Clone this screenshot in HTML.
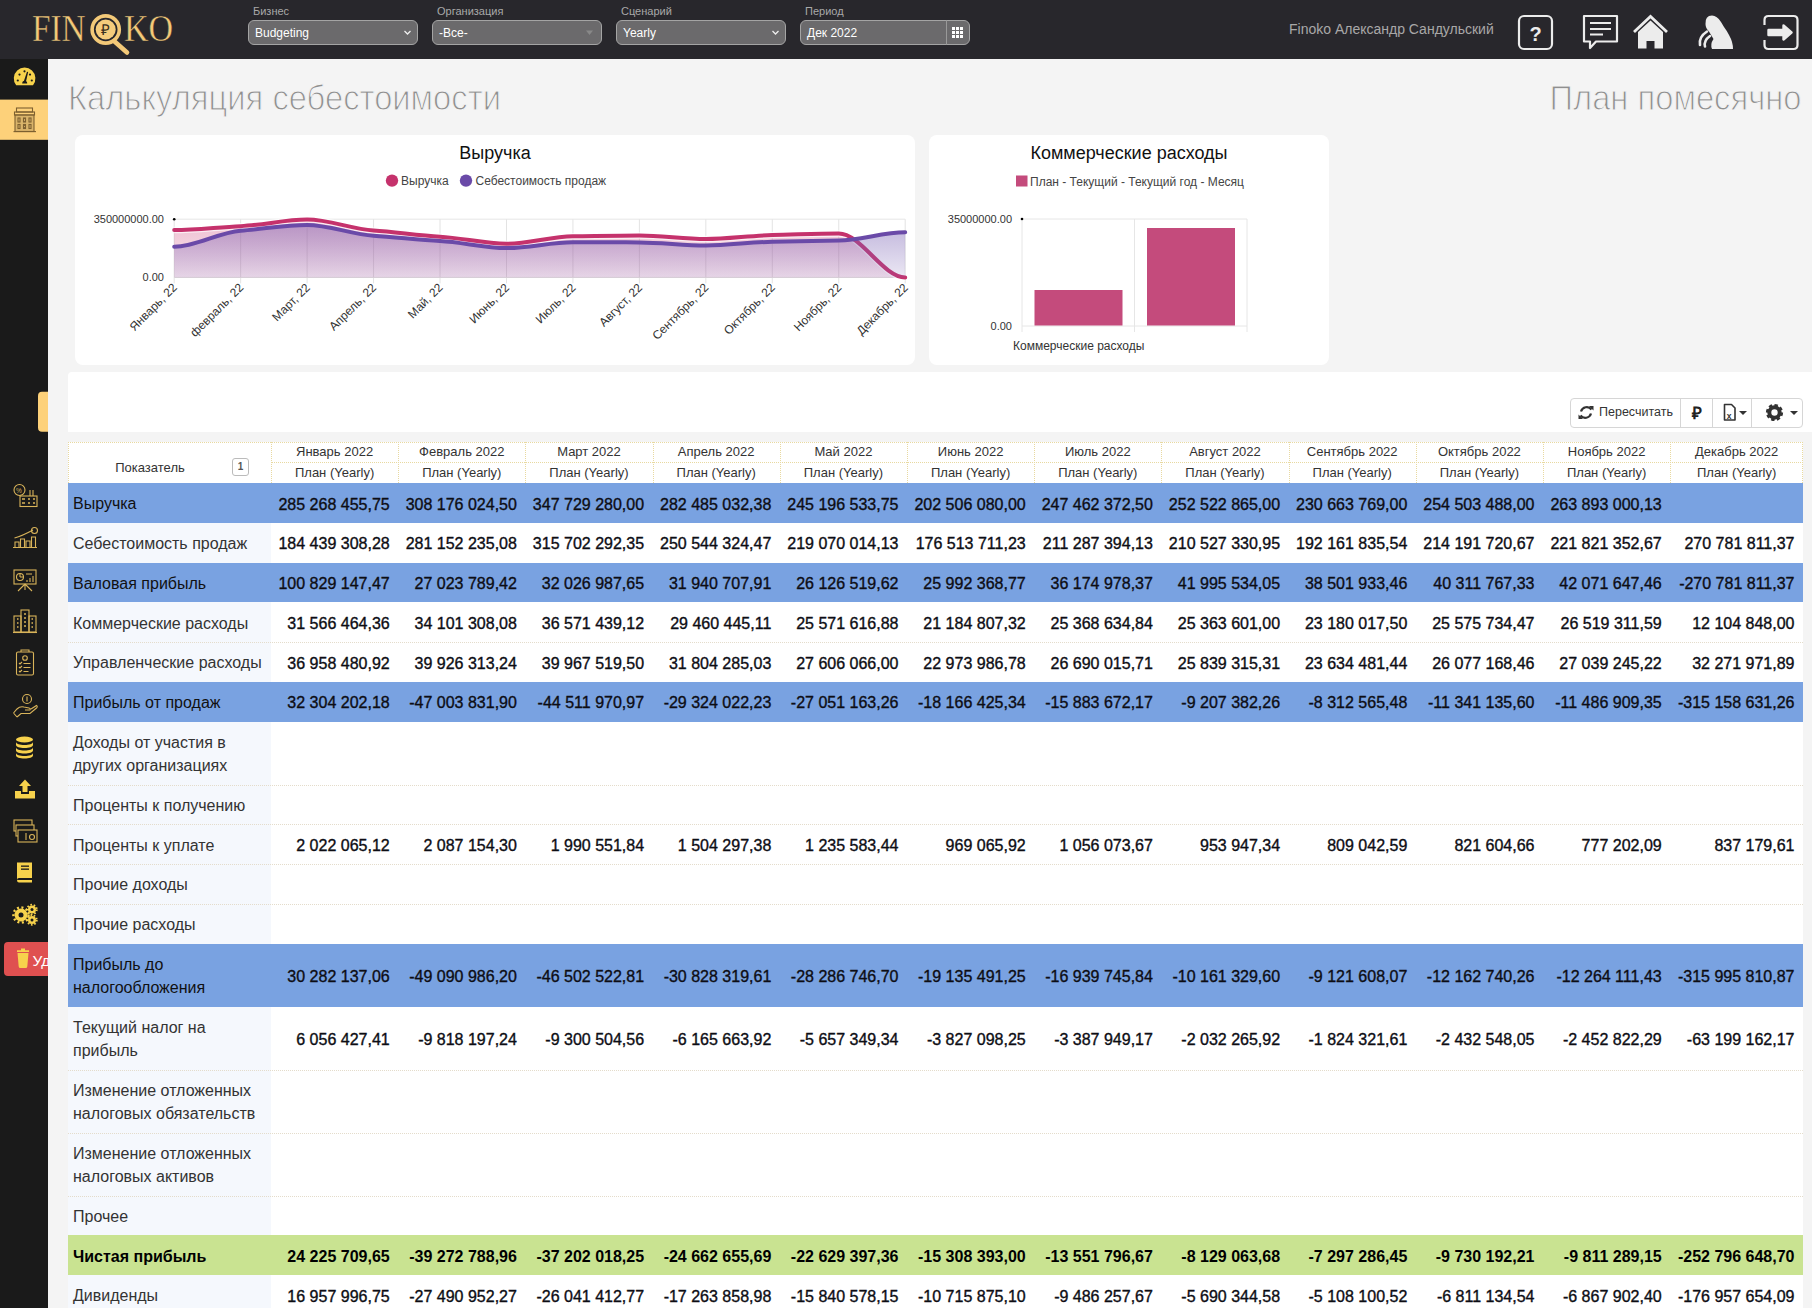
<!DOCTYPE html>
<html><head><meta charset="utf-8">
<style>
*{box-sizing:border-box;margin:0;padding:0}
html,body{width:1812px;height:1308px;overflow:hidden;background:#f4f4f4;font-family:"Liberation Sans",sans-serif;position:relative}
.abs{position:absolute}
#top{position:absolute;left:0;top:0;width:1812px;height:59px;background:#28272c}
#side{position:absolute;left:0;top:59px;width:48px;height:1249px;background:#1a1a1a}
.flbl{position:absolute;top:5px;font-size:11px;color:#a9a9a9}
.sel{position:absolute;top:20px;height:25px;width:170px;border:1px solid #a4a4a4;border-radius:6px;background:#6b6a6c;color:#fff;font-size:12px;padding:5px 0 0 6px}
.title{position:absolute;top:78px;font-size:35px;color:#8f8f8f;font-weight:normal;letter-spacing:0;transform:scaleX(0.935);transform-origin:0 0;-webkit-text-stroke:1.1px #f4f4f4;white-space:nowrap}
.card{position:absolute;background:#fff;border-radius:8px}
.ctitle{position:absolute;font-size:18px;color:#111;text-align:center;width:100%}
.leg{position:absolute;font-size:12px;color:#333}
.axl{position:absolute;font-size:11px;color:#333}
.hl{position:absolute;height:1px;border-top:1px dotted #e8d9a0}
.vl{position:absolute;width:1px;border-left:1px dotted #e8d9a0}
.hdr{position:absolute;text-align:center;font-size:13px;color:#333}
.badge{position:absolute;width:17px;height:18px;border:1px solid #bbb;border-radius:3px;font-size:10px;color:#555;text-align:center;line-height:16px;font-weight:bold}
.row{position:absolute;left:68px;width:1735px;background:#fff}
.sep{position:absolute;left:68px;width:1735px;height:1px;border-top:1px dotted #e4dccb}
.rb{background:#79a2e1}
.rg{background:#c9e391}
.lbl{position:absolute;left:0;top:0;display:flex;align-items:center;background:#f5f8fd}
.rb .lbl,.rg .lbl{background:transparent}
.lt{padding-left:5px;font-size:16px;line-height:23px;color:#333;position:relative;top:1px}
.rb .lt{color:#111}
.rg .lt{color:#000;font-weight:bold}
.val{position:absolute;top:1.5px;text-align:right;padding-right:8.5px;font-size:16px;color:#0d0d14;white-space:nowrap;-webkit-text-stroke:0.35px #0d0d14}
.rg .val{font-weight:bold;color:#000;-webkit-text-stroke:0}
</style></head><body>
<div id="top">
  <div class="flbl" style="left:253px">Бизнес</div>
  <div class="sel" style="left:248px">Budgeting</div>
  <div class="flbl" style="left:437px">Организация</div>
  <div class="sel" style="left:432px">-Все-</div>
  <div class="flbl" style="left:621px">Сценарий</div>
  <div class="sel" style="left:616px">Yearly</div>
  <div class="flbl" style="left:805px">Период</div>
  <div class="sel" style="left:800px">Дек 2022</div>
  <div class="abs" style="left:1289px;top:20.5px;font-size:14px;color:#a8a8a8">Finoko Александр Сандульский</div>
</div>
<svg class="abs" style="left:0;top:0" width="1812" height="59">
<g fill="#f3c978" font-family="Liberation Serif" stroke="#28272c" stroke-width="0.4">
<text x="32" y="41" font-size="37" transform="translate(32,0) scale(0.9,1) translate(-32,0)">FIN</text>
<text x="124" y="41" font-size="37" transform="translate(124,0) scale(0.92,1) translate(-124,0)">KO</text>
</g>
<circle cx="105.7" cy="29.5" r="13.6" fill="none" stroke="#f3c978" stroke-width="3.6"/>
<circle cx="105.7" cy="29.5" r="10" fill="#f5cc7c"/>
<line x1="114" y1="41" x2="127" y2="52.5" stroke="#f3c978" stroke-width="4.6" stroke-linecap="round"/>
<text x="105.7" y="35" font-size="15" text-anchor="middle" fill="#3a3020" font-family="Liberation Serif">₽</text>
<!-- select arrows -->
<g stroke="#eee" stroke-width="1.3" fill="none"><path d="M404.5,31 l3,3 l3,-3"/><path d="M772.5,31 l3,3 l3,-3"/></g>
<path d="M586,30.5 h7 l-3.5,4.5z" fill="#888"/>
<line x1="946.5" y1="20" x2="946.5" y2="45" stroke="#999"/>
<g fill="#fff"><rect x="952" y="27" width="3" height="3"/><rect x="956" y="27" width="3" height="3"/><rect x="960" y="27" width="3" height="3"/>
<rect x="952" y="31" width="3" height="3"/><rect x="956" y="31" width="3" height="3"/><rect x="960" y="31" width="3" height="3"/>
<rect x="952" y="35" width="3" height="3"/><rect x="956" y="35" width="3" height="3"/><rect x="960" y="35" width="3" height="3"/></g>
<!-- right icons -->
<g stroke="#ececec" stroke-width="2.2" fill="none">
<rect x="1519" y="16" width="33" height="33" rx="5"/>
<path d="M1584,16 H1617 V41.5 H1596 L1590,48 V41.5 H1584 Z" stroke-linejoin="round"/>
<path d="M1590,23 H1611 M1590,29 H1611 M1590,34.5 H1603"/>
<path d="M1634,32 L1650.5,16.5 L1667,32" stroke-width="2.8"/>
<path d="M1764.5,25 V20 Q1764.5,16 1768.5,16 H1793.5 Q1797.5,16 1797.5,20 V45 Q1797.5,49 1793.5,49 H1768.5 Q1764.5,49 1764.5,45 V40"/>
</g>
<text x="1535.5" y="40.5" font-size="20" text-anchor="middle" fill="#ececec" font-family="Liberation Sans" font-weight="bold">?</text>
<path d="M1638,32 L1650.5,20.5 L1663,32 V48.5 H1654.5 V41 H1646.5 V48.5 H1638 Z" fill="#ececec"/>
<path d="M1768.5,30 H1783.5 V25.5 L1791.5,32.5 L1783.5,39.5 V35 H1768.5 Z" fill="#ececec" stroke="#ececec" stroke-width="2.4" stroke-linejoin="round"/>
<path d="M1705.5,24 Q1705,15.5 1712,15.5 Q1717,15.5 1721,22 L1724,27 Q1727,31 1729,35 Q1733,42 1733,49 H1712 Q1710,44 1713.5,39 L1709,31.5 Q1705.5,28 1705.5,24 Z" fill="#ececec"/>
<path d="M1700,45 Q1698.5,37 1707,31.5 M1705,46.5 Q1703.5,40.5 1710,36" stroke="#ececec" stroke-width="2.6" fill="none" stroke-linecap="round"/>
</svg>
<div class="title" style="left:68px">Калькуляция себестоимости</div>
<div class="title" style="right:10px;transform-origin:100% 0">План помесячно</div>
<div id="side"></div>
<svg class="abs" style="left:0;top:58px" width="48" height="930">
<!-- speedometer -->
<path d="M16.2,27.2 A10.8,10.8 0 1 1 33,27.2 Z" fill="#f7d24c"/>
<g fill="#1a1a1a"><circle cx="17.8" cy="22.5" r="1.1"/><circle cx="19.5" cy="16.6" r="1.1"/><circle cx="24.5" cy="13.3" r="1.1"/><circle cx="30" cy="16.6" r="1.1"/><circle cx="31.8" cy="22.5" r="1.1"/>
<path d="M23.6,24 L27,13.8 L28.2,14.1 L25.8,24.3 Z"/><path d="M22.2,25.6 Q22.2,22.8 24.7,22.8 Q27.2,22.8 27.2,25.6 Z"/></g>
<!-- active tab -->
<rect x="0" y="41.6" width="48" height="40.2" fill="#fdd17a"/>
<g stroke="#7d6030" stroke-width="1.1" fill="none">
<rect x="16.5" y="50" width="16" height="4"/><rect x="14.5" y="54" width="20" height="3"/><rect x="15" y="57" width="19" height="16.5" fill="#b8975a" fill-opacity="0.5"/>
<line x1="13.5" y1="73.6" x2="36" y2="73.6"/>
<rect x="18" y="60" width="2" height="4"/><rect x="23.5" y="60" width="2" height="4"/><rect x="29" y="60" width="2" height="4"/>
<rect x="18" y="66.5" width="2" height="4"/><rect x="23.5" y="66.5" width="2" height="4"/><rect x="29" y="66.5" width="2" height="4"/>
</g>
<!-- small tab -->
<path d="M48,333.8 L42,333.8 Q38,333.8 38,337.8 L38,369.7 Q38,373.7 42,373.7 L48,373.7 Z" fill="#fdd17a"/>
<g stroke="#d9b45a" stroke-width="1.1" fill="none">
<!-- icon1 factory percent y 485-507 -->
<circle cx="19.5" cy="432" r="5.5"/><text x="16" y="435" font-size="6.5" fill="#d9b45a" stroke="none" font-family="Liberation Sans">%</text>
<rect x="20" y="438" width="17" height="10.5"/><line x1="30" y1="432" x2="30" y2="438"/><line x1="33" y1="432" x2="33" y2="438"/>
<path d="M22,441h3M22,445h3M28,441h2M33,441h2M28,445h2M33,445h2" stroke-width="1.5"/>
<!-- icon2 chart growth 528-548 -->
<path d="M13,489.5 H37 M15,489.5 V484 H19 V489.5 M20.5,489.5 V481 H24.5 V489.5 M26,489.5 V483 H30 V489.5 M31.5,489.5 V479 H35.5 V489.5 M14.5,480 Q22,478 33,472"/>
<circle cx="34.5" cy="472.5" r="3"/>
<!-- icon3 presentation 568-592 -->
<rect x="14" y="512" width="22" height="14"/><circle cx="20" cy="519" r="3.5"/><path d="M20,519 V515.5 M20,519 H23.5"/>
<path d="M26,516h6M27,522v2M30,520v4M33,518v6M25,526 L18,533 M25,526 L32,533 M25,526 V532"/>
<!-- icon4 building 610-633 -->
<rect x="21" y="552" width="8" height="22"/><rect x="14" y="558" width="7" height="16"/><rect x="29" y="558" width="7" height="16"/><line x1="13" y1="574.5" x2="37" y2="574.5"/>
<path d="M24,556h2M24,560h2M24,564h2M24,568h2M17,561h1.5M17,565h1.5M17,569h1.5M31.5,561h1.5M31.5,565h1.5M31.5,569h1.5" stroke-width="1.6"/>
<!-- icon5 clipboard 651-676 -->
<rect x="16.5" y="594" width="17" height="23" rx="1.5"/><path d="M21,594 V592 H29 V594"/><circle cx="25" cy="600" r="2.3"/>
<path d="M19,605l1,1 2,-2M19,609l1,1 2,-2M19,613l1,1 2,-2M23.5,605.5h7M23.5,609.5h7M23.5,613.5h5"/>
<!-- icon6 hand coin 694-718 -->
<circle cx="27" cy="641" r="4.5"/><path d="M27,638.5v5"/>
<path d="M13.5,655 L17,651 Q20,648 24,649 L29,650 Q31,650.5 30,652 L25,652 M17,659 L21,655.5 L30,655.5 L36.5,650 Q38,648.5 36.5,647.5 L31,651 M13.5,655 L17,659"/>
<!-- icon9 money 820-843 -->
<rect x="14" y="762" width="18" height="11"/><rect x="16" y="767" width="18" height="11" fill="#1a1a1a"/><rect x="18" y="772" width="19" height="12" fill="#1a1a1a"/><circle cx="32" cy="779" r="2.5"/><path d="M26,775v7"/>
</g>
<g fill="#f7d24c">
<!-- database 737-757 -->
<ellipse cx="24.5" cy="681.5" rx="8.5" ry="3"/><path d="M16,684v3c0,1.7 3.8,3 8.5,3s8.5,-1.3 8.5,-3v-3c0,1.7 -3.8,3 -8.5,3s-8.5,-1.3 -8.5,-3z"/>
<path d="M16,689.5v3c0,1.7 3.8,3 8.5,3s8.5,-1.3 8.5,-3v-3c0,1.7 -3.8,3 -8.5,3s-8.5,-1.3 -8.5,-3z"/>
<path d="M16,695v2.5c0,1.7 3.8,3 8.5,3s8.5,-1.3 8.5,-3v-2.5c0,1.7 -3.8,3 -8.5,3s-8.5,-1.3 -8.5,-3z"/>
<!-- upload 779-798 -->
<path d="M25,721.5 L31,728 H27.5 V734 H22.5 V728 H19 Z"/><path d="M15,733 H21 V736 H29 V733 H35 V740.5 H15 Z"/>
<!-- book 862-883 -->
<path d="M17,804.5 H32 V820 H19 Q17,820 17,822 V804.5 Z M17,822 Q17,824.5 19,824.5 H32 V822 H19 Z"/>
<!-- gears 905-924 -->
<circle cx="21" cy="857" r="6.5"/><circle cx="32" cy="851.5" r="4"/><circle cx="32" cy="862" r="4"/>
</g>
<g fill="#1a1a1a"><rect x="21" y="807.5" width="8" height="1.3"/><rect x="21" y="810.5" width="8" height="1.3"/><circle cx="21" cy="857" r="2.5"/><circle cx="32" cy="851.5" r="1.5"/><circle cx="32" cy="862" r="1.5"/></g>
<g stroke="#f7d24c" stroke-width="2.4" stroke-dasharray="2 2.5" fill="none"><circle cx="21" cy="857" r="7.6"/><circle cx="32" cy="851.5" r="4.8" stroke-width="1.8" stroke-dasharray="1.6 1.8"/><circle cx="32" cy="862" r="4.8" stroke-width="1.8" stroke-dasharray="1.6 1.8"/></g>
<!-- delete button -->
<path d="M48,884 H8 Q4,884 4,888 V914 Q4,918 8,918 H48 Z" fill="#df5050"/>
<path d="M17.5,895 H28.5 L27.3,908.5 Q27.1,910 25.7,910 H20.3 Q18.9,910 18.7,908.5 Z M17,892.3 H29 V894 H17 Z M21,890.5 H25 V892.3 H21Z" fill="#f7d24c"/>
<text x="32.5" y="907.5" font-size="15.5" fill="#fff" font-family="Liberation Sans">Уд</text>
</svg>
<div class="card" style="left:75px;top:135px;width:840px;height:230px">
  <div class="ctitle" style="top:8px">Выручка</div>
</div>
<div class="card" style="left:929px;top:135px;width:400px;height:230px">
  <div class="ctitle" style="top:8px">Коммерческие расходы</div>
</div>
<div class="abs" style="left:68px;top:372px;width:1744px;height:60px;background:#fff;border-radius:4px 0 0 0"></div>
<div class="abs" style="left:1569.5px;top:398px;width:233px;height:30px;border:1px solid #d6d6d6;border-radius:4px;background:#fff"></div>
<div class="abs" style="left:1680px;top:398px;width:1px;height:30px;background:#d6d6d6"></div>
<div class="abs" style="left:1712px;top:398px;width:1px;height:30px;background:#d6d6d6"></div>
<div class="abs" style="left:1751px;top:398px;width:1px;height:30px;background:#d6d6d6"></div>
<div class="abs" style="left:1599px;top:405px;font-size:12.5px;color:#333">Пересчитать</div>
<svg class="abs" style="left:1560px;top:390px" width="252" height="50">
<g fill="none" stroke="#333" stroke-width="2.2"><path d="M31.5,19.5 A6,6 0 0 0 21,21.5"/><path d="M20.5,25.5 A6,6 0 0 0 31,23.5"/></g>
<path d="M29,16 L33.5,16 L33.5,20.5 Z M23,29 L18.5,29 L18.5,24.5 Z" fill="#333"/>
<text x="136.5" y="29" font-size="17" font-weight="bold" fill="#222" text-anchor="middle" font-family="Liberation Sans">₽</text>
<path d="M164.5,14.5 H171.5 L175,18 V30 H164.5 Z" fill="none" stroke="#333" stroke-width="1.6" stroke-linejoin="round"/>
<text x="166.8" y="28.5" font-size="8.5" font-weight="bold" fill="#333" font-family="Liberation Sans">x</text>
<path d="M179,21 h8 l-4,4z" fill="#333"/>
<circle cx="214.5" cy="22.5" r="5.2" fill="none" stroke="#333" stroke-width="4"/>
<circle cx="214.5" cy="22.5" r="7.3" fill="none" stroke="#333" stroke-width="2.6" stroke-dasharray="3.3 2.4"/>
<path d="M230,21 h8 l-4,4z" fill="#333"/>
</svg>
<svg class="abs" style="left:0;top:0" width="1812" height="400">
<defs><linearGradient id="gp" gradientUnits="userSpaceOnUse" x1="0" y1="219.2" x2="0" y2="277.4"><stop offset="0" stop-color="#7a62b4" stop-opacity="0.5"/><stop offset="1" stop-color="#7a62b4" stop-opacity="0.15"/></linearGradient><linearGradient id="gr" gradientUnits="userSpaceOnUse" x1="0" y1="219.2" x2="0" y2="277.4"><stop offset="0" stop-color="#d04a7e" stop-opacity="0.36"/><stop offset="1" stop-color="#d04a7e" stop-opacity="0.12"/></linearGradient></defs>
<line x1="174.2" y1="219.2" x2="905.2" y2="219.2" stroke="#e6e6e6" stroke-width="1"/>
<line x1="174.20" y1="219.2" x2="174.20" y2="283.4" stroke="#e3e3e3" stroke-width="1"/>
<line x1="240.65" y1="219.2" x2="240.65" y2="283.4" stroke="#e3e3e3" stroke-width="1"/>
<line x1="307.11" y1="219.2" x2="307.11" y2="283.4" stroke="#e3e3e3" stroke-width="1"/>
<line x1="373.56" y1="219.2" x2="373.56" y2="283.4" stroke="#e3e3e3" stroke-width="1"/>
<line x1="440.02" y1="219.2" x2="440.02" y2="283.4" stroke="#e3e3e3" stroke-width="1"/>
<line x1="506.47" y1="219.2" x2="506.47" y2="283.4" stroke="#e3e3e3" stroke-width="1"/>
<line x1="572.93" y1="219.2" x2="572.93" y2="283.4" stroke="#e3e3e3" stroke-width="1"/>
<line x1="639.38" y1="219.2" x2="639.38" y2="283.4" stroke="#e3e3e3" stroke-width="1"/>
<line x1="705.84" y1="219.2" x2="705.84" y2="283.4" stroke="#e3e3e3" stroke-width="1"/>
<line x1="772.29" y1="219.2" x2="772.29" y2="283.4" stroke="#e3e3e3" stroke-width="1"/>
<line x1="838.75" y1="219.2" x2="838.75" y2="283.4" stroke="#e3e3e3" stroke-width="1"/>
<line x1="905.20" y1="219.2" x2="905.20" y2="283.4" stroke="#e3e3e3" stroke-width="1"/>
<line x1="174.2" y1="277.4" x2="905.2" y2="277.4" stroke="#ddd" stroke-width="1"/>
<path d="M174.20,229.96 C196.35,229.96 218.50,227.04 240.65,226.15 C262.81,225.27 284.96,219.58 307.11,219.58 C329.26,219.58 351.41,228.98 373.56,230.43 C395.72,231.87 417.87,235.41 440.02,236.63 C462.17,237.84 484.32,243.73 506.47,243.73 C528.62,243.73 550.78,236.53 572.93,236.25 C595.08,235.97 617.23,235.41 639.38,235.41 C661.53,235.41 683.68,239.04 705.84,239.04 C727.99,239.04 750.14,235.49 772.29,235.08 C794.44,234.67 816.59,233.52 838.75,233.52 C860.90,233.52 883.05,277.40 905.20,277.40 L905.2,277.4 L174.2,277.4 Z" fill="url(#gr)"/>
<path d="M174.20,229.96 C196.35,229.96 218.50,227.04 240.65,226.15 C262.81,225.27 284.96,219.58 307.11,219.58 C329.26,219.58 351.41,228.98 373.56,230.43 C395.72,231.87 417.87,235.41 440.02,236.63 C462.17,237.84 484.32,243.73 506.47,243.73 C528.62,243.73 550.78,236.53 572.93,236.25 C595.08,235.97 617.23,235.41 639.38,235.41 C661.53,235.41 683.68,239.04 705.84,239.04 C727.99,239.04 750.14,235.49 772.29,235.08 C794.44,234.67 816.59,233.52 838.75,233.52 C860.90,233.52 883.05,277.40 905.20,277.40" fill="none" stroke="#fff" stroke-width="6.5" stroke-opacity="0.7"/>
<path d="M174.20,229.96 C196.35,229.96 218.50,227.04 240.65,226.15 C262.81,225.27 284.96,219.58 307.11,219.58 C329.26,219.58 351.41,228.98 373.56,230.43 C395.72,231.87 417.87,235.41 440.02,236.63 C462.17,237.84 484.32,243.73 506.47,243.73 C528.62,243.73 550.78,236.53 572.93,236.25 C595.08,235.97 617.23,235.41 639.38,235.41 C661.53,235.41 683.68,239.04 705.84,239.04 C727.99,239.04 750.14,235.49 772.29,235.08 C794.44,234.67 816.59,233.52 838.75,233.52 C860.90,233.52 883.05,277.40 905.20,277.40" fill="none" stroke="#c5326c" stroke-width="4" stroke-linecap="round"/>
<path d="M174.20,246.73 C196.35,246.73 218.50,232.20 240.65,230.65 C262.81,229.10 284.96,224.90 307.11,224.90 C329.26,224.90 351.41,234.44 373.56,235.74 C395.72,237.03 417.87,239.87 440.02,240.97 C462.17,242.07 484.32,248.05 506.47,248.05 C528.62,248.05 550.78,242.27 572.93,242.27 C595.08,242.27 617.23,242.35 639.38,242.39 C661.53,242.44 683.68,245.45 705.84,245.45 C727.99,245.45 750.14,242.13 772.29,241.78 C794.44,241.44 816.59,240.92 838.75,240.51 C860.90,240.11 883.05,232.37 905.20,232.37 L905.2,277.4 L174.2,277.4 Z" fill="url(#gp)"/>
<path d="M174.20,246.73 C196.35,246.73 218.50,232.20 240.65,230.65 C262.81,229.10 284.96,224.90 307.11,224.90 C329.26,224.90 351.41,234.44 373.56,235.74 C395.72,237.03 417.87,239.87 440.02,240.97 C462.17,242.07 484.32,248.05 506.47,248.05 C528.62,248.05 550.78,242.27 572.93,242.27 C595.08,242.27 617.23,242.35 639.38,242.39 C661.53,242.44 683.68,245.45 705.84,245.45 C727.99,245.45 750.14,242.13 772.29,241.78 C794.44,241.44 816.59,240.92 838.75,240.51 C860.90,240.11 883.05,232.37 905.20,232.37" fill="none" stroke="#6a4aa8" stroke-width="4" stroke-linecap="round"/>
<circle cx="174.2" cy="219.2" r="1.3" fill="#000"/>
<text x="164" y="223" font-size="11" text-anchor="end" fill="#333" font-family="Liberation Sans">350000000.00</text>
<text x="164" y="281" font-size="11" text-anchor="end" fill="#333" font-family="Liberation Sans">0.00</text>
<text transform="translate(177.70,288.4) rotate(-45)" font-size="12" text-anchor="end" fill="#333" font-family="Liberation Sans">Январь, 22</text>
<text transform="translate(244.15,288.4) rotate(-45)" font-size="12" text-anchor="end" fill="#333" font-family="Liberation Sans">февраль, 22</text>
<text transform="translate(310.61,288.4) rotate(-45)" font-size="12" text-anchor="end" fill="#333" font-family="Liberation Sans">Март, 22</text>
<text transform="translate(377.06,288.4) rotate(-45)" font-size="12" text-anchor="end" fill="#333" font-family="Liberation Sans">Апрель, 22</text>
<text transform="translate(443.52,288.4) rotate(-45)" font-size="12" text-anchor="end" fill="#333" font-family="Liberation Sans">Май, 22</text>
<text transform="translate(509.97,288.4) rotate(-45)" font-size="12" text-anchor="end" fill="#333" font-family="Liberation Sans">Июнь, 22</text>
<text transform="translate(576.43,288.4) rotate(-45)" font-size="12" text-anchor="end" fill="#333" font-family="Liberation Sans">Июль, 22</text>
<text transform="translate(642.88,288.4) rotate(-45)" font-size="12" text-anchor="end" fill="#333" font-family="Liberation Sans">Август, 22</text>
<text transform="translate(709.34,288.4) rotate(-45)" font-size="12" text-anchor="end" fill="#333" font-family="Liberation Sans">Сентябрь, 22</text>
<text transform="translate(775.79,288.4) rotate(-45)" font-size="12" text-anchor="end" fill="#333" font-family="Liberation Sans">Октябрь, 22</text>
<text transform="translate(842.25,288.4) rotate(-45)" font-size="12" text-anchor="end" fill="#333" font-family="Liberation Sans">Ноябрь, 22</text>
<text transform="translate(908.70,288.4) rotate(-45)" font-size="12" text-anchor="end" fill="#333" font-family="Liberation Sans">Декабрь, 22</text>
<circle cx="392" cy="180.6" r="6.2" fill="#c5326c"/><circle cx="466" cy="180.6" r="6.2" fill="#6a4aa8"/>
<text x="401" y="184.8" font-size="12" fill="#444" font-family="Liberation Sans">Выручка</text>
<text x="475.5" y="184.8" font-size="12" fill="#444" font-family="Liberation Sans">Себестоимость продаж</text>
<line x1="1022" y1="219" x2="1247" y2="219" stroke="#e6e6e6"/><line x1="1022" y1="326" x2="1247" y2="326" stroke="#e6e6e6"/>
<line x1="1022" y1="219" x2="1022" y2="332" stroke="#e6e6e6"/>
<line x1="1134.5" y1="219" x2="1134.5" y2="332" stroke="#e6e6e6"/>
<line x1="1247" y1="219" x2="1247" y2="332" stroke="#e6e6e6"/>
<rect x="1034.5" y="290" width="88" height="35.5" fill="#c44b7c"/>
<rect x="1147" y="228" width="88" height="97.5" fill="#c44b7c"/>
<circle cx="1022" cy="219" r="1.3" fill="#000"/>
<text x="1012" y="223" font-size="11" text-anchor="end" fill="#333" font-family="Liberation Sans">35000000.00</text>
<text x="1012" y="330" font-size="11" text-anchor="end" fill="#333" font-family="Liberation Sans">0.00</text>
<rect x="1016" y="175.5" width="11.5" height="11" fill="#c44b7c"/>
<text x="1030" y="185.5" font-size="12" fill="#444" font-family="Liberation Sans">План - Текущий - Текущий год - Месяц</text>
<text x="1013" y="350" font-size="12" fill="#333" font-family="Liberation Sans">Коммерческие расходы</text>
</svg><div class="abs" style="left:68px;top:442px;width:1735px;height:41px;background:#fff"></div>
<div class="hl" style="left:68px;top:442px;width:1735px"></div>
<div class="hl" style="left:271px;top:462px;width:1532px"></div>
<div class="vl" style="left:68px;top:442px;height:41px"></div>
<div class="vl" style="left:271.00px;top:442px;height:41px"></div>
<div class="vl" style="left:398.20px;top:442px;height:41px"></div>
<div class="vl" style="left:525.40px;top:442px;height:41px"></div>
<div class="vl" style="left:652.60px;top:442px;height:41px"></div>
<div class="vl" style="left:779.80px;top:442px;height:41px"></div>
<div class="vl" style="left:907.00px;top:442px;height:41px"></div>
<div class="vl" style="left:1034.20px;top:442px;height:41px"></div>
<div class="vl" style="left:1161.40px;top:442px;height:41px"></div>
<div class="vl" style="left:1288.60px;top:442px;height:41px"></div>
<div class="vl" style="left:1415.80px;top:442px;height:41px"></div>
<div class="vl" style="left:1543.00px;top:442px;height:41px"></div>
<div class="vl" style="left:1670.20px;top:442px;height:41px"></div>
<div class="vl" style="left:1802.00px;top:442px;height:41px"></div>
<div class="hdr" style="left:68px;top:460px;width:164px;height:16px;line-height:16px;">Показатель</div>
<div class="badge" style="left:232px;top:458px">1</div>
<div class="hdr" style="left:271.00px;top:442px;width:127.20px;height:20px;line-height:20px">Январь 2022</div>
<div class="hdr" style="left:271.00px;top:462px;width:127.20px;height:21px;line-height:21px">План (Yearly)</div>
<div class="hdr" style="left:398.20px;top:442px;width:127.20px;height:20px;line-height:20px">Февраль 2022</div>
<div class="hdr" style="left:398.20px;top:462px;width:127.20px;height:21px;line-height:21px">План (Yearly)</div>
<div class="hdr" style="left:525.40px;top:442px;width:127.20px;height:20px;line-height:20px">Март 2022</div>
<div class="hdr" style="left:525.40px;top:462px;width:127.20px;height:21px;line-height:21px">План (Yearly)</div>
<div class="hdr" style="left:652.60px;top:442px;width:127.20px;height:20px;line-height:20px">Апрель 2022</div>
<div class="hdr" style="left:652.60px;top:462px;width:127.20px;height:21px;line-height:21px">План (Yearly)</div>
<div class="hdr" style="left:779.80px;top:442px;width:127.20px;height:20px;line-height:20px">Май 2022</div>
<div class="hdr" style="left:779.80px;top:462px;width:127.20px;height:21px;line-height:21px">План (Yearly)</div>
<div class="hdr" style="left:907.00px;top:442px;width:127.20px;height:20px;line-height:20px">Июнь 2022</div>
<div class="hdr" style="left:907.00px;top:462px;width:127.20px;height:21px;line-height:21px">План (Yearly)</div>
<div class="hdr" style="left:1034.20px;top:442px;width:127.20px;height:20px;line-height:20px">Июль 2022</div>
<div class="hdr" style="left:1034.20px;top:462px;width:127.20px;height:21px;line-height:21px">План (Yearly)</div>
<div class="hdr" style="left:1161.40px;top:442px;width:127.20px;height:20px;line-height:20px">Август 2022</div>
<div class="hdr" style="left:1161.40px;top:462px;width:127.20px;height:21px;line-height:21px">План (Yearly)</div>
<div class="hdr" style="left:1288.60px;top:442px;width:127.20px;height:20px;line-height:20px">Сентябрь 2022</div>
<div class="hdr" style="left:1288.60px;top:462px;width:127.20px;height:21px;line-height:21px">План (Yearly)</div>
<div class="hdr" style="left:1415.80px;top:442px;width:127.20px;height:20px;line-height:20px">Октябрь 2022</div>
<div class="hdr" style="left:1415.80px;top:462px;width:127.20px;height:21px;line-height:21px">План (Yearly)</div>
<div class="hdr" style="left:1543.00px;top:442px;width:127.20px;height:20px;line-height:20px">Ноябрь 2022</div>
<div class="hdr" style="left:1543.00px;top:462px;width:127.20px;height:21px;line-height:21px">План (Yearly)</div>
<div class="hdr" style="left:1670.20px;top:442px;width:132.80px;height:20px;line-height:20px">Декабрь 2022</div>
<div class="hdr" style="left:1670.20px;top:462px;width:132.80px;height:21px;line-height:21px">План (Yearly)</div>
<div class="row rb" style="top:483.00px;height:39.75px">
<div class="lbl" style="width:203px;height:39.75px"><div class="lt">Выручка</div></div>
<div class="val" style="left:203.00px;width:127.20px;line-height:39.75px">285 268 455,75</div>
<div class="val" style="left:330.20px;width:127.20px;line-height:39.75px">308 176 024,50</div>
<div class="val" style="left:457.40px;width:127.20px;line-height:39.75px">347 729 280,00</div>
<div class="val" style="left:584.60px;width:127.20px;line-height:39.75px">282 485 032,38</div>
<div class="val" style="left:711.80px;width:127.20px;line-height:39.75px">245 196 533,75</div>
<div class="val" style="left:839.00px;width:127.20px;line-height:39.75px">202 506 080,00</div>
<div class="val" style="left:966.20px;width:127.20px;line-height:39.75px">247 462 372,50</div>
<div class="val" style="left:1093.40px;width:127.20px;line-height:39.75px">252 522 865,00</div>
<div class="val" style="left:1220.60px;width:127.20px;line-height:39.75px">230 663 769,00</div>
<div class="val" style="left:1347.80px;width:127.20px;line-height:39.75px">254 503 488,00</div>
<div class="val" style="left:1475.00px;width:127.20px;line-height:39.75px">263 893 000,13</div>
</div>
<div class="row rn" style="top:522.75px;height:39.75px">
<div class="lbl" style="width:203px;height:39.75px"><div class="lt">Себестоимость продаж</div></div>
<div class="val" style="left:203.00px;width:127.20px;line-height:39.75px">184 439 308,28</div>
<div class="val" style="left:330.20px;width:127.20px;line-height:39.75px">281 152 235,08</div>
<div class="val" style="left:457.40px;width:127.20px;line-height:39.75px">315 702 292,35</div>
<div class="val" style="left:584.60px;width:127.20px;line-height:39.75px">250 544 324,47</div>
<div class="val" style="left:711.80px;width:127.20px;line-height:39.75px">219 070 014,13</div>
<div class="val" style="left:839.00px;width:127.20px;line-height:39.75px">176 513 711,23</div>
<div class="val" style="left:966.20px;width:127.20px;line-height:39.75px">211 287 394,13</div>
<div class="val" style="left:1093.40px;width:127.20px;line-height:39.75px">210 527 330,95</div>
<div class="val" style="left:1220.60px;width:127.20px;line-height:39.75px">192 161 835,54</div>
<div class="val" style="left:1347.80px;width:127.20px;line-height:39.75px">214 191 720,67</div>
<div class="val" style="left:1475.00px;width:127.20px;line-height:39.75px">221 821 352,67</div>
<div class="val" style="left:1602.20px;width:132.80px;line-height:39.75px">270 781 811,37</div>
</div>
<div class="row rb" style="top:562.50px;height:39.75px">
<div class="lbl" style="width:203px;height:39.75px"><div class="lt">Валовая прибыль</div></div>
<div class="val" style="left:203.00px;width:127.20px;line-height:39.75px">100 829 147,47</div>
<div class="val" style="left:330.20px;width:127.20px;line-height:39.75px">27 023 789,42</div>
<div class="val" style="left:457.40px;width:127.20px;line-height:39.75px">32 026 987,65</div>
<div class="val" style="left:584.60px;width:127.20px;line-height:39.75px">31 940 707,91</div>
<div class="val" style="left:711.80px;width:127.20px;line-height:39.75px">26 126 519,62</div>
<div class="val" style="left:839.00px;width:127.20px;line-height:39.75px">25 992 368,77</div>
<div class="val" style="left:966.20px;width:127.20px;line-height:39.75px">36 174 978,37</div>
<div class="val" style="left:1093.40px;width:127.20px;line-height:39.75px">41 995 534,05</div>
<div class="val" style="left:1220.60px;width:127.20px;line-height:39.75px">38 501 933,46</div>
<div class="val" style="left:1347.80px;width:127.20px;line-height:39.75px">40 311 767,33</div>
<div class="val" style="left:1475.00px;width:127.20px;line-height:39.75px">42 071 647,46</div>
<div class="val" style="left:1602.20px;width:132.80px;line-height:39.75px">-270 781 811,37</div>
</div>
<div class="row rn" style="top:602.25px;height:39.75px">
<div class="lbl" style="width:203px;height:39.75px"><div class="lt">Коммерческие расходы</div></div>
<div class="val" style="left:203.00px;width:127.20px;line-height:39.75px">31 566 464,36</div>
<div class="val" style="left:330.20px;width:127.20px;line-height:39.75px">34 101 308,08</div>
<div class="val" style="left:457.40px;width:127.20px;line-height:39.75px">36 571 439,12</div>
<div class="val" style="left:584.60px;width:127.20px;line-height:39.75px">29 460 445,11</div>
<div class="val" style="left:711.80px;width:127.20px;line-height:39.75px">25 571 616,88</div>
<div class="val" style="left:839.00px;width:127.20px;line-height:39.75px">21 184 807,32</div>
<div class="val" style="left:966.20px;width:127.20px;line-height:39.75px">25 368 634,84</div>
<div class="val" style="left:1093.40px;width:127.20px;line-height:39.75px">25 363 601,00</div>
<div class="val" style="left:1220.60px;width:127.20px;line-height:39.75px">23 180 017,50</div>
<div class="val" style="left:1347.80px;width:127.20px;line-height:39.75px">25 575 734,47</div>
<div class="val" style="left:1475.00px;width:127.20px;line-height:39.75px">26 519 311,59</div>
<div class="val" style="left:1602.20px;width:132.80px;line-height:39.75px">12 104 848,00</div>
</div>
<div class="row rn" style="top:642.00px;height:39.75px">
<div class="lbl" style="width:203px;height:39.75px"><div class="lt">Управленческие расходы</div></div>
<div class="val" style="left:203.00px;width:127.20px;line-height:39.75px">36 958 480,92</div>
<div class="val" style="left:330.20px;width:127.20px;line-height:39.75px">39 926 313,24</div>
<div class="val" style="left:457.40px;width:127.20px;line-height:39.75px">39 967 519,50</div>
<div class="val" style="left:584.60px;width:127.20px;line-height:39.75px">31 804 285,03</div>
<div class="val" style="left:711.80px;width:127.20px;line-height:39.75px">27 606 066,00</div>
<div class="val" style="left:839.00px;width:127.20px;line-height:39.75px">22 973 986,78</div>
<div class="val" style="left:966.20px;width:127.20px;line-height:39.75px">26 690 015,71</div>
<div class="val" style="left:1093.40px;width:127.20px;line-height:39.75px">25 839 315,31</div>
<div class="val" style="left:1220.60px;width:127.20px;line-height:39.75px">23 634 481,44</div>
<div class="val" style="left:1347.80px;width:127.20px;line-height:39.75px">26 077 168,46</div>
<div class="val" style="left:1475.00px;width:127.20px;line-height:39.75px">27 039 245,22</div>
<div class="val" style="left:1602.20px;width:132.80px;line-height:39.75px">32 271 971,89</div>
</div>
<div class="row rb" style="top:681.75px;height:39.75px">
<div class="lbl" style="width:203px;height:39.75px"><div class="lt">Прибыль от продаж</div></div>
<div class="val" style="left:203.00px;width:127.20px;line-height:39.75px">32 304 202,18</div>
<div class="val" style="left:330.20px;width:127.20px;line-height:39.75px">-47 003 831,90</div>
<div class="val" style="left:457.40px;width:127.20px;line-height:39.75px">-44 511 970,97</div>
<div class="val" style="left:584.60px;width:127.20px;line-height:39.75px">-29 324 022,23</div>
<div class="val" style="left:711.80px;width:127.20px;line-height:39.75px">-27 051 163,26</div>
<div class="val" style="left:839.00px;width:127.20px;line-height:39.75px">-18 166 425,34</div>
<div class="val" style="left:966.20px;width:127.20px;line-height:39.75px">-15 883 672,17</div>
<div class="val" style="left:1093.40px;width:127.20px;line-height:39.75px">-9 207 382,26</div>
<div class="val" style="left:1220.60px;width:127.20px;line-height:39.75px">-8 312 565,48</div>
<div class="val" style="left:1347.80px;width:127.20px;line-height:39.75px">-11 341 135,60</div>
<div class="val" style="left:1475.00px;width:127.20px;line-height:39.75px">-11 486 909,35</div>
<div class="val" style="left:1602.20px;width:132.80px;line-height:39.75px">-315 158 631,26</div>
</div>
<div class="row rn" style="top:721.50px;height:63.00px">
<div class="lbl" style="width:203px;height:63.00px"><div class="lt">Доходы от участия в<br>других организациях</div></div>
</div>
<div class="row rn" style="top:784.50px;height:39.75px">
<div class="lbl" style="width:203px;height:39.75px"><div class="lt">Проценты к получению</div></div>
</div>
<div class="row rn" style="top:824.25px;height:39.75px">
<div class="lbl" style="width:203px;height:39.75px"><div class="lt">Проценты к уплате</div></div>
<div class="val" style="left:203.00px;width:127.20px;line-height:39.75px">2 022 065,12</div>
<div class="val" style="left:330.20px;width:127.20px;line-height:39.75px">2 087 154,30</div>
<div class="val" style="left:457.40px;width:127.20px;line-height:39.75px">1 990 551,84</div>
<div class="val" style="left:584.60px;width:127.20px;line-height:39.75px">1 504 297,38</div>
<div class="val" style="left:711.80px;width:127.20px;line-height:39.75px">1 235 583,44</div>
<div class="val" style="left:839.00px;width:127.20px;line-height:39.75px">969 065,92</div>
<div class="val" style="left:966.20px;width:127.20px;line-height:39.75px">1 056 073,67</div>
<div class="val" style="left:1093.40px;width:127.20px;line-height:39.75px">953 947,34</div>
<div class="val" style="left:1220.60px;width:127.20px;line-height:39.75px">809 042,59</div>
<div class="val" style="left:1347.80px;width:127.20px;line-height:39.75px">821 604,66</div>
<div class="val" style="left:1475.00px;width:127.20px;line-height:39.75px">777 202,09</div>
<div class="val" style="left:1602.20px;width:132.80px;line-height:39.75px">837 179,61</div>
</div>
<div class="row rn" style="top:864.00px;height:39.75px">
<div class="lbl" style="width:203px;height:39.75px"><div class="lt">Прочие доходы</div></div>
</div>
<div class="row rn" style="top:903.75px;height:39.75px">
<div class="lbl" style="width:203px;height:39.75px"><div class="lt">Прочие расходы</div></div>
</div>
<div class="row rb" style="top:943.50px;height:63.00px">
<div class="lbl" style="width:203px;height:63.00px"><div class="lt">Прибыль до<br>налогообложения</div></div>
<div class="val" style="left:203.00px;width:127.20px;line-height:63.00px">30 282 137,06</div>
<div class="val" style="left:330.20px;width:127.20px;line-height:63.00px">-49 090 986,20</div>
<div class="val" style="left:457.40px;width:127.20px;line-height:63.00px">-46 502 522,81</div>
<div class="val" style="left:584.60px;width:127.20px;line-height:63.00px">-30 828 319,61</div>
<div class="val" style="left:711.80px;width:127.20px;line-height:63.00px">-28 286 746,70</div>
<div class="val" style="left:839.00px;width:127.20px;line-height:63.00px">-19 135 491,25</div>
<div class="val" style="left:966.20px;width:127.20px;line-height:63.00px">-16 939 745,84</div>
<div class="val" style="left:1093.40px;width:127.20px;line-height:63.00px">-10 161 329,60</div>
<div class="val" style="left:1220.60px;width:127.20px;line-height:63.00px">-9 121 608,07</div>
<div class="val" style="left:1347.80px;width:127.20px;line-height:63.00px">-12 162 740,26</div>
<div class="val" style="left:1475.00px;width:127.20px;line-height:63.00px">-12 264 111,43</div>
<div class="val" style="left:1602.20px;width:132.80px;line-height:63.00px">-315 995 810,87</div>
</div>
<div class="row rn" style="top:1006.50px;height:63.00px">
<div class="lbl" style="width:203px;height:63.00px"><div class="lt">Текущий налог на<br>прибыль</div></div>
<div class="val" style="left:203.00px;width:127.20px;line-height:63.00px">6 056 427,41</div>
<div class="val" style="left:330.20px;width:127.20px;line-height:63.00px">-9 818 197,24</div>
<div class="val" style="left:457.40px;width:127.20px;line-height:63.00px">-9 300 504,56</div>
<div class="val" style="left:584.60px;width:127.20px;line-height:63.00px">-6 165 663,92</div>
<div class="val" style="left:711.80px;width:127.20px;line-height:63.00px">-5 657 349,34</div>
<div class="val" style="left:839.00px;width:127.20px;line-height:63.00px">-3 827 098,25</div>
<div class="val" style="left:966.20px;width:127.20px;line-height:63.00px">-3 387 949,17</div>
<div class="val" style="left:1093.40px;width:127.20px;line-height:63.00px">-2 032 265,92</div>
<div class="val" style="left:1220.60px;width:127.20px;line-height:63.00px">-1 824 321,61</div>
<div class="val" style="left:1347.80px;width:127.20px;line-height:63.00px">-2 432 548,05</div>
<div class="val" style="left:1475.00px;width:127.20px;line-height:63.00px">-2 452 822,29</div>
<div class="val" style="left:1602.20px;width:132.80px;line-height:63.00px">-63 199 162,17</div>
</div>
<div class="row rn" style="top:1069.50px;height:63.00px">
<div class="lbl" style="width:203px;height:63.00px"><div class="lt">Изменение отложенных<br>налоговых обязательств</div></div>
</div>
<div class="row rn" style="top:1132.50px;height:63.00px">
<div class="lbl" style="width:203px;height:63.00px"><div class="lt">Изменение отложенных<br>налоговых активов</div></div>
</div>
<div class="row rn" style="top:1195.50px;height:39.75px">
<div class="lbl" style="width:203px;height:39.75px"><div class="lt">Прочее</div></div>
</div>
<div class="row rg" style="top:1235.25px;height:39.75px">
<div class="lbl" style="width:203px;height:39.75px"><div class="lt">Чистая прибыль</div></div>
<div class="val" style="left:203.00px;width:127.20px;line-height:39.75px">24 225 709,65</div>
<div class="val" style="left:330.20px;width:127.20px;line-height:39.75px">-39 272 788,96</div>
<div class="val" style="left:457.40px;width:127.20px;line-height:39.75px">-37 202 018,25</div>
<div class="val" style="left:584.60px;width:127.20px;line-height:39.75px">-24 662 655,69</div>
<div class="val" style="left:711.80px;width:127.20px;line-height:39.75px">-22 629 397,36</div>
<div class="val" style="left:839.00px;width:127.20px;line-height:39.75px">-15 308 393,00</div>
<div class="val" style="left:966.20px;width:127.20px;line-height:39.75px">-13 551 796,67</div>
<div class="val" style="left:1093.40px;width:127.20px;line-height:39.75px">-8 129 063,68</div>
<div class="val" style="left:1220.60px;width:127.20px;line-height:39.75px">-7 297 286,45</div>
<div class="val" style="left:1347.80px;width:127.20px;line-height:39.75px">-9 730 192,21</div>
<div class="val" style="left:1475.00px;width:127.20px;line-height:39.75px">-9 811 289,15</div>
<div class="val" style="left:1602.20px;width:132.80px;line-height:39.75px">-252 796 648,70</div>
</div>
<div class="row rn" style="top:1275.00px;height:39.75px">
<div class="lbl" style="width:203px;height:39.75px"><div class="lt">Дивиденды</div></div>
<div class="val" style="left:203.00px;width:127.20px;line-height:39.75px">16 957 996,75</div>
<div class="val" style="left:330.20px;width:127.20px;line-height:39.75px">-27 490 952,27</div>
<div class="val" style="left:457.40px;width:127.20px;line-height:39.75px">-26 041 412,77</div>
<div class="val" style="left:584.60px;width:127.20px;line-height:39.75px">-17 263 858,98</div>
<div class="val" style="left:711.80px;width:127.20px;line-height:39.75px">-15 840 578,15</div>
<div class="val" style="left:839.00px;width:127.20px;line-height:39.75px">-10 715 875,10</div>
<div class="val" style="left:966.20px;width:127.20px;line-height:39.75px">-9 486 257,67</div>
<div class="val" style="left:1093.40px;width:127.20px;line-height:39.75px">-5 690 344,58</div>
<div class="val" style="left:1220.60px;width:127.20px;line-height:39.75px">-5 108 100,52</div>
<div class="val" style="left:1347.80px;width:127.20px;line-height:39.75px">-6 811 134,54</div>
<div class="val" style="left:1475.00px;width:127.20px;line-height:39.75px">-6 867 902,40</div>
<div class="val" style="left:1602.20px;width:132.80px;line-height:39.75px">-176 957 654,09</div>
</div>
<div class="sep" style="top:642.00px"></div>
<div class="sep" style="top:784.50px"></div>
<div class="sep" style="top:824.25px"></div>
<div class="sep" style="top:864.00px"></div>
<div class="sep" style="top:903.75px"></div>
<div class="sep" style="top:1069.50px"></div>
<div class="sep" style="top:1132.50px"></div>
<div class="sep" style="top:1195.50px"></div>
</body></html>
